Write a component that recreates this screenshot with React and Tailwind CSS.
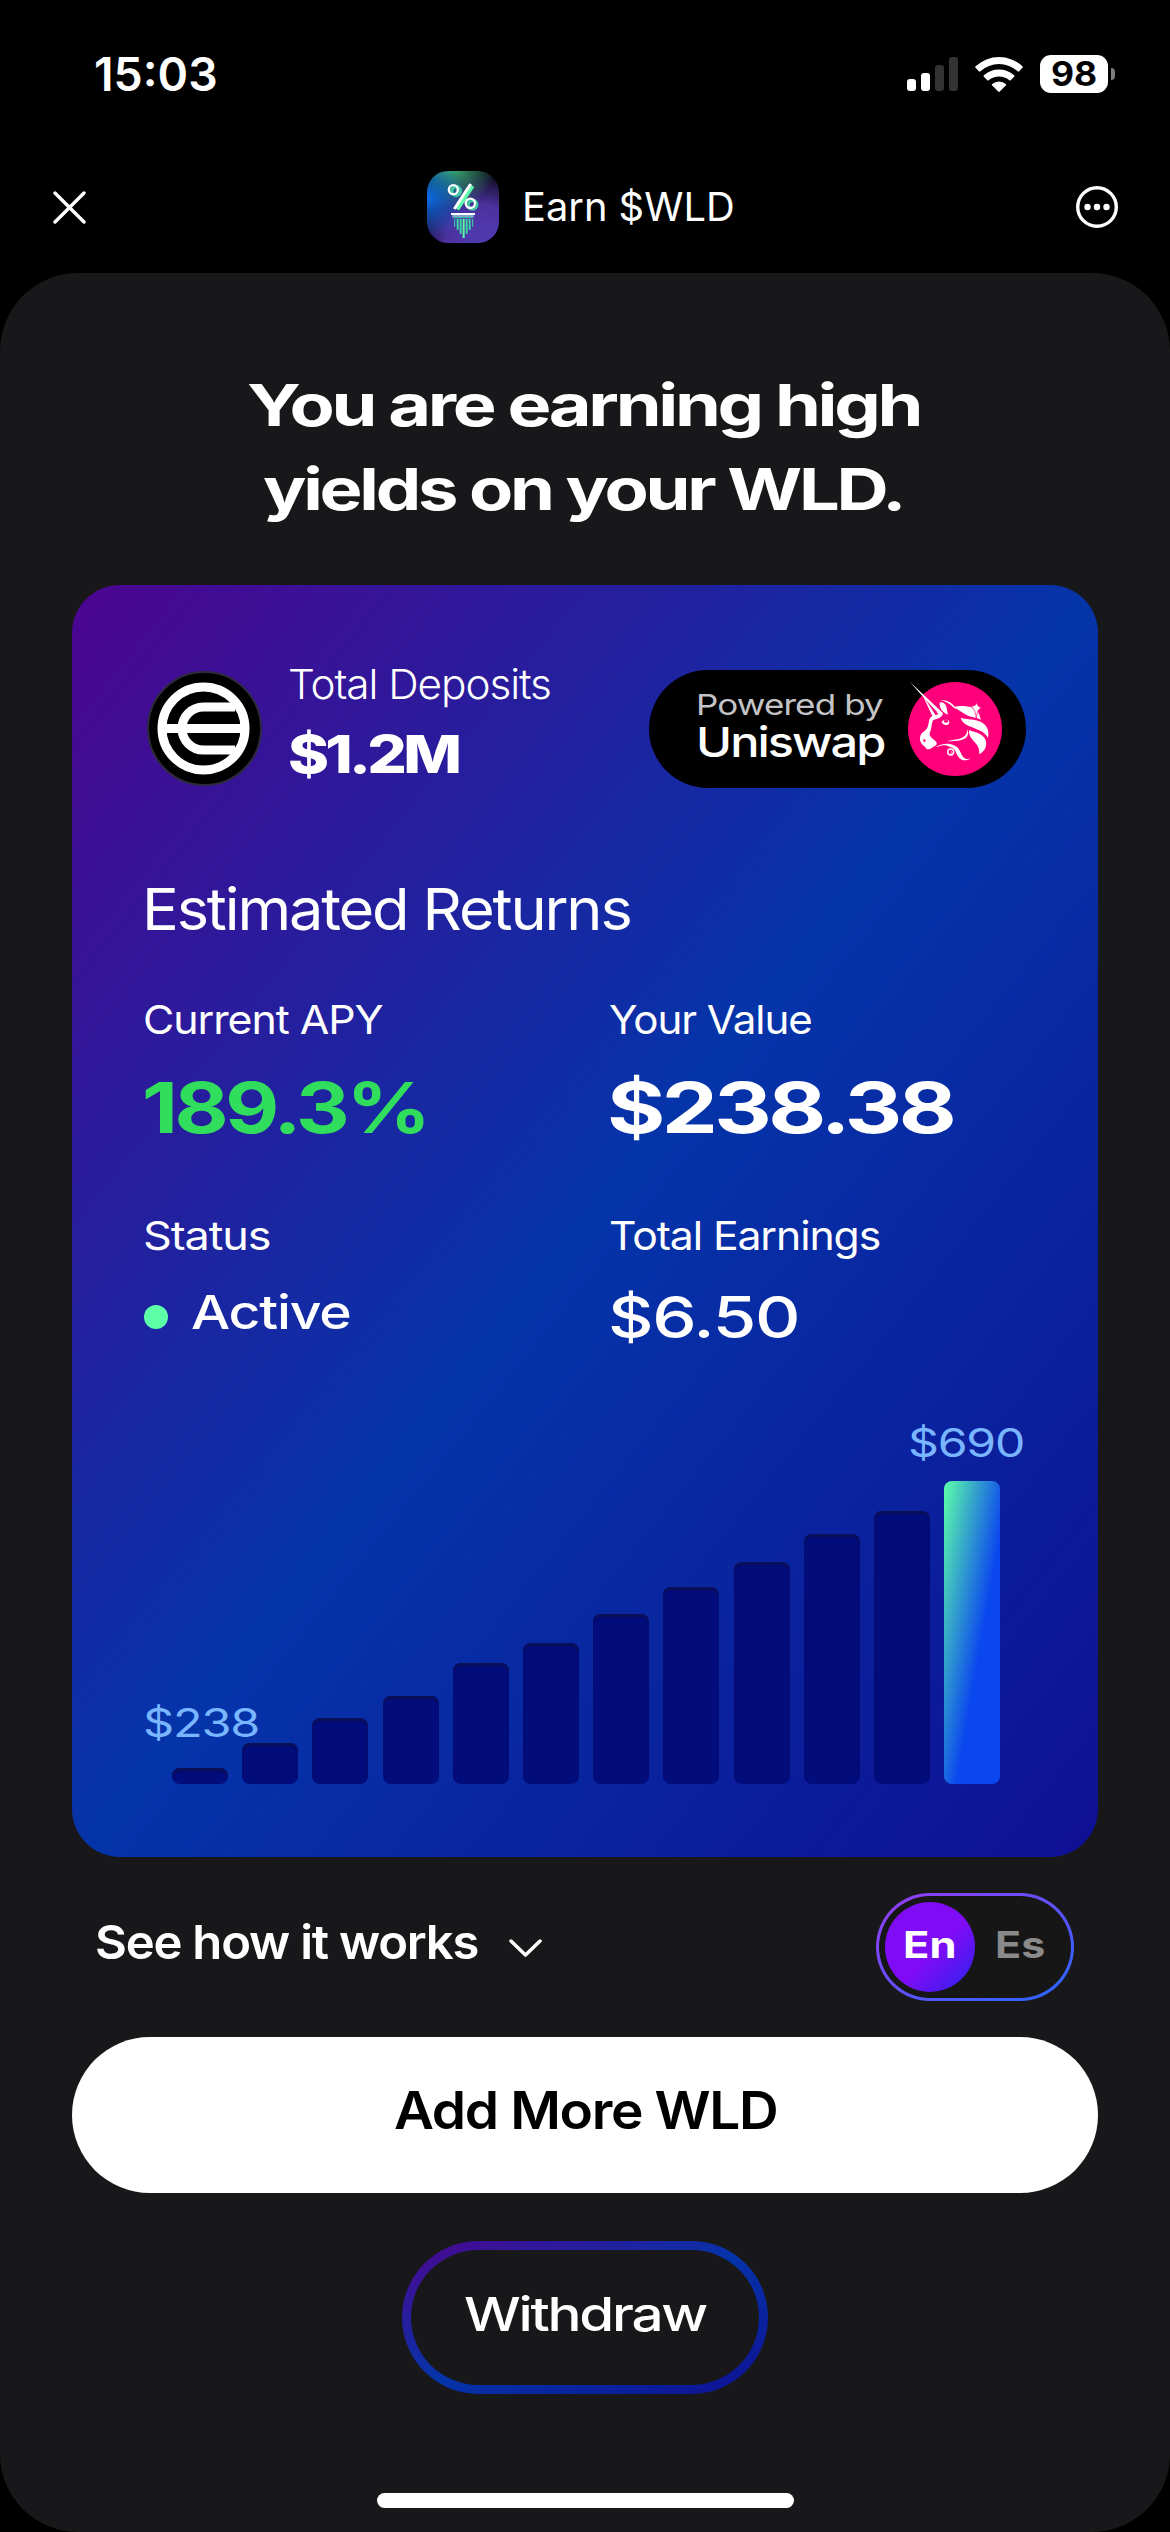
import { useLayoutEffect, useRef } from 'react';

const bars = [16, 41, 66, 88, 121, 141, 170, 197, 222, 250, 273];

// Widens a line of text so that it fills the given width
function Wide({ width, className = '', children }) {
  const ref = useRef(null);

  useLayoutEffect(() => {
    const el = ref.current;
    el.style.transform = `scaleX(${width / el.offsetWidth})`;
  }, [width, children]);

  return (
    <div className={`shrink-0 text-left whitespace-nowrap ${className}`} style={{ width }}>
      <span ref={ref} className="inline-block w-max origin-left align-top">
        {children}
      </span>
    </div>
  );
}

function StatusBar() {
  return (
    <div className="flex h-[148px] shrink-0 items-center justify-between pl-[94px] pr-[55px]">
      <Wide width={124} className="text-[46px] leading-none font-semibold">
        15:03
      </Wide>
      <div className="flex items-center">
        <div className="mr-[17px] flex h-[34px] items-end gap-[5px]">
          <div className="h-3 w-[9px] rounded-[3px] bg-white" />
          <div className="h-[18px] w-[9px] rounded-[3px] bg-white" />
          <div className="h-[26px] w-[9px] rounded-[3px] bg-[#333333]" />
          <div className="h-[34px] w-[9px] rounded-[3px] bg-[#333333]" />
        </div>
        <svg viewBox="0 0 48 36" className="mr-[17px] h-9 w-12" fill="#fff">
          <path d="M.6 10.2a1 1 0 0 0 0 1.5l3.2 3.5a1 1 0 0 0 1.5 0 28 28 0 0 1 37.4 0 1 1 0 0 0 1.5 0l3.2-3.5a1 1 0 0 0 0-1.5 34.5 34.5 0 0 0-46.8 0Z" />
          <path d="M8.900 19.200a1 1 0 0 0 0 1.500l3.400 3.500a1 1 0 0 0 1.400 0 16 16 0 0 1 20.600 0 1 1 0 0 0 1.400 0l3.400-3.500a1 1 0 0 0 0-1.500 22.800 22.800 0 0 0-30.200 0Z" />
          <path d="M17.200 28a1 1 0 0 0 0 1.500l6 6a1.100 1.100 0 0 0 1.600 0l6-6a1 1 0 0 0 0-1.500 10.500 10.500 0 0 0-13.600 0Z" />
        </svg>
        <div className="flex h-[38px] w-[68px] items-center justify-center rounded-[11px] bg-white">
          <Wide width={46} className="text-[34px] leading-none font-bold text-black">
            98
          </Wide>
        </div>
        <div className="ml-[3px] h-3 w-1 rounded-r-full bg-[#7d7d7d]" />
      </div>
    </div>
  );
}

function AppIcon() {
  return (
    <div className="h-[72px] w-[72px] overflow-hidden rounded-[21px] bg-black bg-[radial-gradient(circle_at_0%_38%,#0a6be8_0%,transparent_48%),radial-gradient(circle_at_32%_-12%,#45c98a_0%,transparent_50%),radial-gradient(circle_at_78%_100%,#4f37ac_20%,#4a319c_42%,transparent_82%)]">
      <svg viewBox="0 0 216 216" className="h-full w-full" fill="none">
        <g stroke="#3fc4a4" strokeWidth="11">
          <circle cx="87" cy="60" r="13" />
          <circle cx="136" cy="101" r="13" />
          <path d="M136 44 90 115" stroke="#5dfaa9" strokeWidth="14" />
        </g>
        <g stroke="#fff" strokeWidth="7">
          <circle cx="79" cy="56" r="13.500" />
          <circle cx="130" cy="97" r="14" />
          <path d="M131 39 82 114" strokeWidth="9" />
        </g>
        <path d="M72 126h72v6H72z" fill="#fff" />
        <path d="M76 132h64v8H76z" fill="#7fa6c6" />
        <path d="M80 138h56v4H80z" fill="#3ab5a5" />
        <g stroke="#3ad9a4" strokeWidth="6">
          <path d="M92 144v32M101 144v44M119 144v44M128 144v32" />
          <path d="M83 144v24M137 144v24" strokeWidth="3" />
          <path d="M110 144v57" stroke="#5dfaa9" />
        </g>
      </svg>
    </div>
  );
}

function Header() {
  return (
    <div className="mb-[7px] flex h-[118px] shrink-0 items-center justify-between pl-[53px] pr-[52px]">
      <svg viewBox="0 0 33 33" className="h-[33px] w-[33px]" fill="none" stroke="#fff" strokeWidth="3.400" strokeLinecap="round">
        <path d="M2 2l29 29M31 2 2 31" />
      </svg>
      <div className="flex items-center gap-[23px]">
        <AppIcon />
        <Wide width={213} className="text-[40px] leading-none">
          Earn $WLD
        </Wide>
      </div>
      <svg viewBox="0 0 42 42" className="h-[42px] w-[42px]" fill="#fff">
        <circle cx="21" cy="21" r="19.300" fill="none" stroke="#fff" strokeWidth="3.400" />
        <circle cx="11.500" cy="21" r="3.200" />
        <circle cx="21" cy="21" r="3.200" />
        <circle cx="30.500" cy="21" r="3.200" />
      </svg>
    </div>
  );
}

function WorldcoinLogo() {
  return (
    <svg viewBox="0 0 115 115" className="mt-px h-[115px] w-[115px] shrink-0" fill="none">
      <circle cx="57.500" cy="57.500" r="56.500" fill="#000" stroke="#2e2a3c" strokeWidth="2" />
      <g stroke="#fff" strokeWidth="9">
        <circle cx="56.500" cy="57.500" r="41.500" />
        <path d="M88 36H56.500a21.500 21.500 0 0 0 0 43H88M16 57.500h80" />
      </g>
    </svg>
  );
}

function UniswapLogo() {
  return (
    <svg viewBox="24 21 282 282" className="h-[94px] w-[94px] overflow-visible" fill="#fff">
      <circle cx="165" cy="162" r="141" fill="#ff007a" />
      {/* horns */}
      <path d="M30 21 128 113q2 8-7 13-10-3-20 2l-9-17-24-50 38 59 9-2Z" />
      <path d="M73 71l32 49 8-3-4-8Z" fill="#ff007a" />
      <path d="M70 64l36 55-9 4Z" />
      {/* face */}
      <path d="M98 124c8 2 15 1 20-2l4 4c-8 6-16 6-22 9-6 9-4 18-7 28-2 8-6 12-3 19 5 9 17 13 20 21 2 8-8 10-14 15-6 5-12 6-17 3-3-8-14-10-18-22-3-11 0-23 10-29 7-4 10-9 13-17 4-12 1-24 14-31Z" />
      <path d="M70 191q7 1 7 6-1 5-6 4Z" fill="#ff007a" />
      {/* ear */}
      <path d="M119 83c6-4 16 1 19 9 4 10 3 17 6 27-13-5-27-18-25-36Z" />
      <path d="M121 76c20-3 35 7 43 19 15-4 35-1 48 1 12 3 20 9 24 18l7 20c-14-8-27-7-39-12-15-6-25-18-42-23-12-14-26-20-41-23Z" />
      {/* eye */}
      <path d="M125 142c1-9 20-11 23-2 1 12-18 14-23 2Z" />
      <ellipse cx="138" cy="139" rx="7" ry="4" fill="#ff007a" />
      {/* mane */}
      <path d="M182 128c20 6 42 4 60 12 17 8 27 24 22 49-10-19-24-22-42-30-19-8-35-13-40-31Z" />
      <path d="M207 165c20 8 43 10 50 31 5 17-2 33-19 42 0-19-4-26-15-38-9-10-17-18-16-35Z" />
      <path d="M202 163c7 16-1 28-18 32-14 4-29 3-41 4 16-6 34-4 46-12 9-6 13-13 13-24Z" />
      {/* chin curl */}
      <path d="M106 217c19-12 41-14 58-5 17 8 16 22 25 33 6 7 15 9 23 5-13 10-29 7-37-5-8-11-8-22-19-27l-8-3c-20-9-26 0-42 2Z" />
      <circle cx="152" cy="231" r="9" fill="none" stroke="#fff" strokeWidth="4" />
      <path d="M152 231c6-4 6 7-1 5" fill="none" stroke="#fff" strokeWidth="2" />
      {/* sparkle */}
      <path d="M231 78q-2 18 15 20-16 2-17 36-1-32-18-41 19 3 20-15Z" stroke="#ff007a" strokeWidth="2" />
    </svg>
  );
}

function DepositsRow() {
  return (
    <div className="flex h-[118px] justify-between">
      <div className="flex gap-[26px]">
        <WorldcoinLogo />
        <div>
          <Wide width={263} className="text-[41px] leading-[28px] font-light tracking-tight">
            Total Deposits
          </Wide>
          <Wide width={170} className="mt-[27px] text-[52px] leading-[60px] font-extrabold tracking-[-0.06em]">
            $1.2M
          </Wide>
        </div>
      </div>
      <div className="flex w-[377px] items-center justify-between rounded-full bg-black pl-[47px] pr-6">
        <div className="pb-2.5">
          <Wide width={187} className="text-[29px] leading-[36px] tracking-tight text-[#c4c4c8]">
            Powered by
          </Wide>
          <Wide width={189} className="text-[41px] leading-[39px] font-medium tracking-[-0.04em]">
            Uniswap
          </Wide>
        </div>
        <UniswapLogo />
      </div>
    </div>
  );
}

function Stats() {
  return (
    <div className="mt-14 grid grid-cols-[464px_1fr] text-[40px] leading-[40px] tracking-tight">
      <div>
        <Wide width={240} className="-ml-1">
          Current APY
        </Wide>
        <Wide width={285} className="mt-7 -ml-[5px] text-[70px] leading-[80px] font-bold tracking-[-0.04em] text-[#30dd5c]">
          189.3%
        </Wide>
        <Wide width={127} className="mt-[68px] -ml-1">
          Status
        </Wide>
        <div className="mt-[26px] -ml-[3px] flex items-center gap-[23px]">
          <div className="mt-[9px] h-6 w-6 rounded-full bg-[#5dffa9]" />
          <Wide width={160} className="text-[47px] leading-[60px] font-medium">
            Active
          </Wide>
        </div>
      </div>
      <div>
        <Wide width={203} className="-ml-[2px]">
          Your Value
        </Wide>
        <Wide width={346} className="mt-7 -ml-[4px] text-[70px] leading-[80px] font-bold tracking-[-0.04em]">
          $238.38
        </Wide>
        <Wide width={271} className="mt-[68px] -ml-[2px]">
          Total Earnings
        </Wide>
        <Wide width={191} className="mt-[31px] -ml-[3px] text-[58px] leading-[60px] font-medium">
          $6.50
        </Wide>
      </div>
    </div>
  );
}

function Chart() {
  return (
    <div className="relative flex h-[437px] items-end gap-[14.200px] pl-[25px]">
      {bars.map((height) => (
        <div
          key={height}
          className="w-14 rounded-[8px] bg-[#030c7b] shadow-[inset_0_3px_2px_#0b1058]"
          style={{ height }}
        />
      ))}
      <div className="h-[303px] w-14 rounded-[8px] bg-[linear-gradient(100deg,#5dffa9_0%,#0b47ee_60%,#0b47ee_100%)]" />
      <Wide width={116} className="absolute -left-1 top-[356px] text-[39px] leading-[40px] tracking-tight text-[#7ab5ff]">
        $238
      </Wide>
      <Wide width={116} className="absolute right-[2px] top-[76px] text-[39px] leading-[40px] tracking-tight text-[#7ab5ff]">
        $690
      </Wide>
    </div>
  );
}

export default function App() {
  return (
    <div className="flex h-[2532px] w-[1170px] flex-col overflow-hidden bg-black font-['Inter','Liberation_Sans',sans-serif] text-white">
      <StatusBar />
      <Header />
      <main className="flex flex-1 flex-col rounded-[78px] bg-[#18181a] px-[72px] pt-[90px]">
        <h1 className="flex flex-col items-center pr-1 text-[58px] leading-[84px] font-bold tracking-[-0.045em]">
          <Wide width={673}>You are earning high</Wide>
          <Wide width={640}>yields on your WLD.</Wide>
        </h1>

        <section className="mt-[54px] h-[1272px] shrink-0 rounded-[48px] bg-[linear-gradient(to_bottom_right,#4c0590_0%,#0534a9_50%,#0f1094_100%)] pt-[85px] pl-[75px] pr-[72px]">
          <DepositsRow />
          <Wide width={489} className="mt-[86px] -ml-[5px] text-[58px] leading-[70px] tracking-[-0.035em]">
            Estimated Returns
          </Wide>
          <Stats />
          <Chart />
        </section>

        <div className="mt-9 flex h-[108px] shrink-0 items-center justify-between pl-[23px] pr-6">
          <button className="flex items-center gap-[31px] pb-2.5">
            <Wide width={383} className="text-[47px] leading-[56px] font-semibold tracking-tight">
              See how it works
            </Wide>
            <svg viewBox="0 0 33 18" className="mt-3 h-[18px] w-[33px]" fill="none" stroke="#fff" strokeWidth="3.500" strokeLinecap="round" strokeLinejoin="round">
              <path d="M2 2l14.500 14L31 2" />
            </svg>
          </button>
          <div className="h-[108px] w-[198px] rounded-full bg-[linear-gradient(to_bottom_right,#9a3bf5,#2767ff)] p-[3px]">
            <div className="flex h-full items-center rounded-full bg-[#161616] px-1.5 text-[37px] leading-none font-bold">
              <div className="flex h-[90px] w-[90px] items-center justify-center rounded-full bg-[linear-gradient(135deg,#7f0cf5_55%,#2a22ee_100%)] pb-1.5">
                <Wide width={54}>En</Wide>
              </div>
              <Wide width={50} className="ml-5 pb-1.5 text-[#8a8a8a]">
                Es
              </Wide>
            </div>
          </div>
        </div>

        <button className="mt-9 flex h-[156px] shrink-0 items-center justify-center rounded-full bg-white pb-2 text-black">
          <Wide width={383} className="text-[52px] leading-[60px] font-semibold tracking-tight">
            Add More WLD
          </Wide>
        </button>

        <button className="mt-12 h-[153px] w-[366px] shrink-0 self-center rounded-full bg-[linear-gradient(to_bottom_right,#4c0590_0%,#0534a9_50%,#0f1094_100%)] p-[9px]">
          <span className="flex h-full items-center justify-center rounded-full bg-[#18181a] pb-2">
            <Wide width={242} className="text-[47px] leading-[56px] font-medium tracking-[-0.04em]">
              Withdraw
            </Wide>
          </span>
        </button>

        <div className="mt-[99px] h-[15px] w-[417px] shrink-0 self-center rounded-full bg-white" />
      </main>
    </div>
  );
}
